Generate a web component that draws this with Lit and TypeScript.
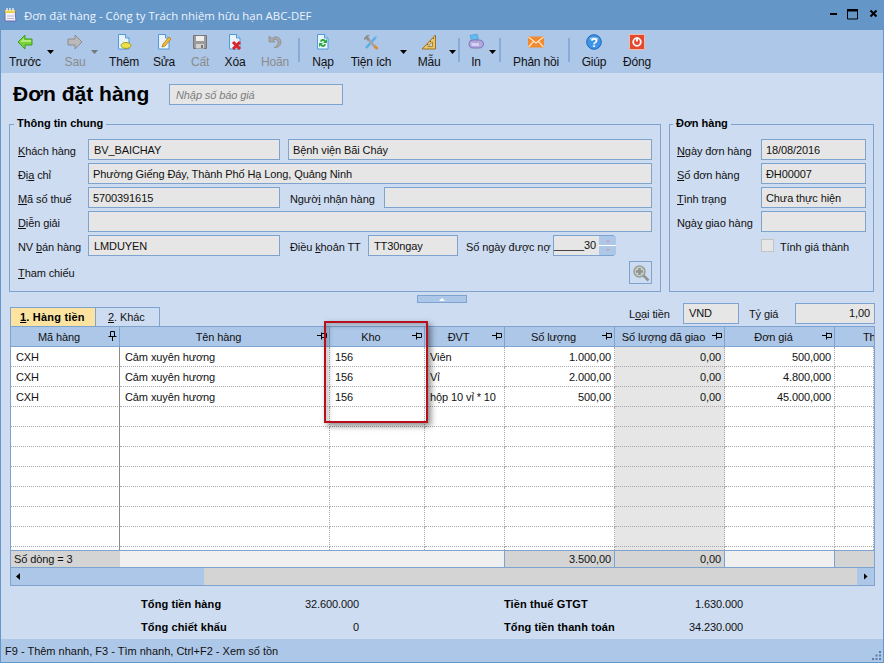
import { LitElement, html, css, svg } from 'lit';
import { customElement } from 'lit/decorators.js';

const page = svg`<path d="M2.500 .5h7l3.500 3.500v11h-10.500z" fill="#eaf3fc" stroke="#4f9ad8"/><path d="M9.500 .5v3.500h3.500" fill="#bcd9f3" stroke="#4f9ad8"/>`;

const icons: Record<string, unknown> = {
  back: svg`<path d="M8 1 1 8l7 7v-4h7V5H8z" fill="#78d13c" stroke="#3f9e1c" stroke-linejoin="round"/><path d="M7 4 3 8h11V6H7z" fill="#b4ec7c"/>`,
  next: svg`<path d="M8 1l7 7-7 7v-4H1V5h7z" fill="#b9b9b9" stroke="#8c8c8c" stroke-linejoin="round"/>`,
  add: svg`${page}<ellipse cx="10" cy="11.500" rx="5" ry="3" fill="#ecdf4a" stroke="#a39a1e"/>`,
  edit: svg`${page}<path d="M6 13l1-3 6-7 2 2-6 7z" fill="#f2b83c" stroke="#b5791a" stroke-width=".8"/>`,
  save: svg`<path d="M1.500 1.500h13v13h-13z" fill="#9b9b9b" stroke="#777"/><path d="M4 2h8v5H4z" fill="#eee"/><path d="M4 10h8v4.500H4z" fill="#d2d2d2"/><path d="M9 11h2v3H9z" fill="#777"/>`,
  del: svg`${page}<path d="M6 8l7 7M13 8l-7 7" stroke="#d9252a" stroke-width="3"/>`,
  undo: svg`<path d="M2 2v6h6L6 6c3-1.500 5.500.5 5 3-.3 2-2 3.500-4 4.500 4 .5 7-2 7-5.500 0-4.500-5.500-7-9-3.500z" fill="#a8a8a8" stroke="#8a8a8a" stroke-width=".7"/>`,
  load: svg`${page}<path d="M5 7.500a3 3 0 0 1 5.500-1L12 5v4H8l1.300-1.300A1.700 1.700 0 0 0 6.500 8zM11 10.500a3 3 0 0 1-5.500 1L4 13V9h4l-1.300 1.300a1.700 1.700 0 0 0 2.800-.3z" fill="#2da83a"/>`,
  tools: svg`<path d="M3 14 13 3" stroke="#59aee6" stroke-width="2.500"/><path d="M13 14 5 5" stroke="#a3a3a3" stroke-width="2.500"/><path d="M1 4l3-3h3L5 3l2 2-2 2-2-2-2 1z" fill="#8f8f8f"/><path d="M11.500 12l3 3" stroke="#e58a2c" stroke-width="2.500"/><path d="M12 1l3 1-2 3z" fill="#8fc4ea"/>`,
  ruler: svg`<path d="M14.500 1v14H1z" fill="#e8c36a" stroke="#9a7425"/><path d="M11.500 8v4.500H7z" fill="#cddcf1" stroke="#9a7425" stroke-width=".8"/><path d="M6 10l1 1M9 7l1 1M12 4l1 1" stroke="#7a5a1a"/>`,
  print: svg`<path d="M2 1.500 9 0l1.500 5-7 1.500z" fill="#62bdee" stroke="#3f93cf" stroke-width=".6"/><path d="M1 9.500Q1 6 5 6h7q3.500.5 3.500 4 0 4-5 4H5q-4 0-4-4.500z" fill="#b0a7dd" stroke="#8076b8"/><path d="M3 9h8v3H4z" fill="#d6d1f0"/>`,
  mail: svg`<path d="M0 2.500h16v11H0z" fill="#f28a2e"/><path d="M.5 3 8 9l7.500-6M.5 13l5-5.500M15.500 13l-5-5.500" fill="none" stroke="#fde6cc" stroke-width="1.200"/>`,
  help: svg`<circle cx="8" cy="8" r="7.300" fill="#3f93e6" stroke="#1f66b8"/><path d="M3 5a6 4 0 0 1 10 0 9 5 0 0 1-10 0" fill="#a9d3f7"/><text x="8" y="12.500" font-size="12" font-weight="700" text-anchor="middle" fill="#fff" font-family="Liberation Sans">?</text>`,
  close: svg`<path d="M.5.5h15v15H.5z" fill="#e2492f" stroke="#f5b9a8"/><circle cx="8" cy="8" r="3.800" fill="none" stroke="#fff" stroke-width="1.800"/><path d="M8 3.500v4" stroke="#fff" stroke-width="1.800"/>`,
};

type Tool = { c: number; w: number; kind: 'btn' | 'caret' | 'sep'; label?: string; icon?: string; off?: boolean };

const btn = (c: number, w: number, label: string, icon: string, off = false): Tool => ({ c, w, kind: 'btn', label, icon, off });
const caret = (c: number, off = false): Tool => ({ c, w: 7, kind: 'caret', off });
const sep = (c: number): Tool => ({ c, w: 2, kind: 'sep' });

const TOOLS: Tool[] = [
  btn(25, 36, 'Trước', 'back'), caret(50.5),
  btn(75, 30, 'Sau', 'next', true), caret(94.5, true),
  btn(124, 40, 'Thêm', 'add'), btn(164, 30, 'Sửa', 'edit'),
  btn(200, 30, 'Cất', 'save', true), btn(235, 32, 'Xóa', 'del'),
  btn(275, 36, 'Hoãn', 'undo', true), sep(299),
  btn(323, 30, 'Nạp', 'load'), btn(371, 50, 'Tiện ích', 'tools'), caret(403),
  btn(429, 34, 'Mẫu', 'ruler'), caret(452), sep(459),
  btn(476, 24, 'In', 'print'), caret(492.5), sep(500),
  btn(536, 56, 'Phản hồi', 'mail'), sep(569),
  btn(594, 36, 'Giúp', 'help'), btn(637, 36, 'Đóng', 'close'),
];

const HEADERS = ['Mã hàng', 'Tên hàng', 'Kho', 'ĐVT', 'Số lượng', 'Số lượng đã giao', 'Đơn giá', 'Thành tiền'];

const ROWS = [
  ['CXH', 'Cảm xuyên hương', '156', 'Viên', '1.000,00', '0,00', '500,000', ''],
  ['CXH', 'Cảm xuyên hương', '156', 'Vỉ', '2.000,00', '0,00', '4.800,000', ''],
  ['CXH', 'Cảm xuyên hương', '156', 'hộp 10 vỉ * 10', '500,00', '0,00', '45.000,000', ''],
  ...Array.from({ length: 7 }, () => ['', '', '', '', '', '', '', '']),
];

const FOOTER = ['Số dòng = 3', '', '', '', '3.500,00', '0,00', '', ''];

@customElement('app-root')
export class AppRoot extends LitElement {
  static styles = css`
    :host {
      display: block;
      width: 884px;
      height: 663px;
      font: 11px 'Liberation Sans', Arial, sans-serif;
      letter-spacing: -0.1px;
      color: #111;
    }
    * { box-sizing: border-box; }
    u { text-underline-offset: 1px; }

    .win {
      position: relative;
      display: flex;
      flex-direction: column;
      height: 663px;
      background: #cddcf1;
      border: 1px solid #6496c8;
      border-top: 0;
      overflow: hidden;
    }

    .titlebar {
      flex: 0 0 30px;
      display: flex;
      align-items: center;
      margin: 0 -1px;
      padding: 0 6px 0 4px;
      background: #6496c8;
      color: #eef4fb;
      font-family: 'Open Sans', sans-serif;
      font-size: 11.4px;
      letter-spacing: 0;
    }
    .titlebar svg { display: block; }
    .title-text { margin-left: 7px; flex: 1; }
    .ctrls { display: flex; align-items: center; }

    .toolbar {
      flex: 0 0 43px;
      display: flex;
      background: #adc7e8;
      font-size: 12px;
      letter-spacing: -0.2px;
    }
    .tool {
      flex: none;
      display: flex;
      flex-direction: column;
      align-items: center;
      padding-top: 4px;
      white-space: nowrap;
    }
    .tool svg { display: block; }
    .tool span { margin-top: 5px; line-height: 14px; }
    .tool.off { color: #8b8b8b; }
    .caret {
      flex: none;
      width: 7px;
      height: 4px;
      margin-top: 20px;
      background: #000;
      clip-path: polygon(0 0, 100% 0, 50% 100%);
    }
    .caret.off { background: #777; }
    .sep {
      flex: none;
      height: 24px;
      margin-top: 8px;
      background: #8aabd6;
    }

    .doc-head {
      display: flex;
      align-items: center;
      height: 21px;
      margin: 11px 0 12px;
    }
    h1 {
      margin: 0 0 2px 12px;
      width: 156px;
      font-size: 21px;
      line-height: 21px;
      letter-spacing: 0;
      color: #000;
    }
    .quote {
      width: 174px;
      height: 21px;
      padding: 0 6px;
      line-height: 20px;
      background: #e6e6e6;
      border: 1px solid #7ea3cf;
      color: #7d7d7d;
      font-style: italic;
    }

    .groups { display: flex; height: 175px; padding-left: 8px; gap: 8px; }
    fieldset {
      margin: 0;
      min-width: 0;
      border: 1px solid #7ea3cf;
      display: flex;
      flex-direction: column;
      gap: 3px;
    }
    .general { flex: 0 0 652px; padding: 7px 8px 7px; }
    .order { flex: 0 0 205px; padding: 7px 7px 7px; }
    legend {
      margin-left: -4px;
      padding: 0 3px 2px;
      font-weight: 700;
      line-height: 13px;
      letter-spacing: 0;
      color: #000;
    }
    .row { display: flex; flex: 0 0 21px; height: 21px; align-items: center; white-space: nowrap; }
    .lbl { flex: none; padding-top: 3px; }
    .w70 { width: 70px; }
    .w84 { width: 84px; }
    .w94 { width: 94px; }
    .w78 { width: 78px; }
    .w90 { width: 90px; }
    .w87 { width: 87px; }
    .field {
      flex: none;
      height: 21px;
      padding: 0 4px;
      line-height: 20px;
      background: #e6e6e6;
      border: 1px solid #7ea3cf;
      overflow: hidden;
    }
    .p5 { padding-left: 5px; }
    .grow { flex: 1; }
    .w192 { width: 192px; }
    .ml8 { margin-left: 8px; }
    .ml10 { margin-left: 10px; }
    .end { justify-content: space-between; height: 23px; flex-basis: 23px; margin-top: 2px; }
    .end .lbl { padding-top: 1px; }
    .right { text-align: right; }

    .spin {
      flex: none;
      display: flex;
      width: 61px;
      height: 21px;
      background: #e6e6e6;
      border: 1px solid #7ea3cf;
    }
    .spin-val { flex: 1; padding-right: 3px; line-height: 19px; text-align: right; white-space: nowrap; }
    .spin-btns {
      flex: 0 0 17px;
      display: flex;
      flex-direction: column;
      justify-content: space-between;
      align-items: center;
      padding: 4px 0;
      background: linear-gradient(#adc7e8 9px, #fff 9px, #fff 10px, #adc7e8 10px);
    }
    .tri-up, .tri-down { width: 0; height: 0; border: 2px solid transparent; }
    .tri-up { border-bottom: 2px solid #d29aa8; border-top: 0; }
    .tri-down { border-top: 2px solid #d29aa8; border-bottom: 0; }

    .search {
      flex: none;
      width: 23px;
      height: 23px;
      display: flex;
      align-items: center;
      justify-content: center;
      border: 1px solid #7ea3cf;
    }
    .box {
      flex: none;
      width: 13px;
      height: 13px;
      background: #e6e6e6;
      border: 1px solid #c3c3c3;
      margin-right: 6px;
    }

    .splitter {
      display: flex;
      justify-content: center;
      align-items: center;
      width: 50px;
      height: 8px;
      margin: 3px 0 0 416px;
      background: #adc7e8;
      border: 1px solid #7ea3cf;
    }
    .splitter i {
      width: 0;
      height: 0;
      border: 3px solid transparent;
      border-bottom: 3px solid #fff;
      border-top: 0;
    }

    .tabline {
      display: flex;
      height: 23px;
      padding-left: 9px;
      white-space: nowrap;
    }
    .tab {
      flex: none;
      align-self: flex-end;
      height: 20px;
      margin-bottom: -1px;
      line-height: 19px;
      border: 1px solid #7ea3cf;
      border-bottom: 0;
    }
    .tab.on {
      width: 86px;
      padding-left: 9px;
      background: #fde3a0;
      font-weight: 700;
      letter-spacing: 0.2px;
      color: #000;
    }
    .tab.plain { width: 64px; padding-left: 12px; border-left: 0; }
    .rates { display: flex; align-items: flex-start; margin-left: auto; padding-right: 8px; }
    .rates .lbl { padding-top: 5px; }
    .rates .field { line-height: 19px; }
    .w54 { width: 54px; }
    .w46 { width: 46px; }
    .w56 { width: 56px; }
    .w80 { width: 80px; }

    .table {
      margin: 0 8px 0 9px;
      height: 260px;
      border: 1px solid #7ea3cf;
      background: #fff;
      overflow: hidden;
      flex: none;
    }
    .cols {
      display: grid;
      grid-template-columns: 109px 210px 95px 80px 110px 110px 110px 39px;
    }
    .hd {
      position: relative;
      height: 20px;
      padding-right: 12px;
      line-height: 20px;
      text-align: center;
      white-space: nowrap;
      overflow: hidden;
      background: #adc7e8;
      border-right: 1px solid #7ea3cf;
      border-bottom: 1px solid #7ea3cf;
    }
    .hd svg { position: absolute; right: 1px; top: 5px; }
    .hd.first svg { right: 2px; top: 4px; }
    .hd.cut { padding: 0 0 0 28px; text-align: left; border-right: 0; }
    .cell {
      height: 20px;
      padding: 0 3px 0 5px;
      line-height: 20px;
      white-space: nowrap;
      overflow: hidden;
      border-right: 1px dotted #a9a9a9;
      border-bottom: 1px dotted #a9a9a9;
    }
    .cell.num { text-align: right; }
    .cell.first { border-right: 1px solid #8a8a8a; }
    .cell.gray { background: #e6e6e6; }
    .cell.fill { height: 3px; border-bottom: 0; }
    .foot {
      height: 17px;
      padding: 0 3px;
      line-height: 16px;
      background: #f0f0f0;
      border-top: 1px solid #7ea3cf;
      white-space: nowrap;
    }
    .foot.first { background: #d4d4d4; }
    .foot.sum { background: #d4d4d4; text-align: right; }
    .foot.line { border-right: 1px solid #7ea3cf; }
    .scroll {
      display: flex;
      align-items: center;
      height: 18px;
      background: #d4d4d4;
      border-top: 1px solid #7ea3cf;
    }
    .thumb {
      flex: 0 0 193px;
      height: 17px;
      display: flex;
      align-items: center;
      padding-left: 5px;
      background: #adc7e8;
    }
    .thumb i, .sc-end i { width: 4px; height: 7px; background: #000; }
    .thumb i { clip-path: polygon(100% 0, 100% 100%, 0 50%); }
    .sc-end {
      margin-left: auto;
      flex: 0 0 17px;
      height: 17px;
      display: flex;
      align-items: center;
      justify-content: center;
      background: #adc7e8;
    }
    .sc-end i { clip-path: polygon(0 0, 100% 50%, 0 100%); }

    .summary {
      display: grid;
      grid-template-columns: 140px 78px 145px 150px 89px;
      grid-auto-rows: 23px;
      align-items: center;
      padding: 7px 0 0 140px;
      height: 53px;
      flex: none;
      white-space: nowrap;
    }
    .summary b { color: #000; letter-spacing: 0.1px; padding-bottom: 1px; }
    .summary span { text-align: right; padding-bottom: 1px; }
    .col2 { grid-column: 2; }
    .col4 { grid-column: 4; }

    .status {
      flex: 1;
      display: flex;
      align-items: center;
      justify-content: space-between;
      padding: 0 0 0 4px;
      background: #adc7e8;
      letter-spacing: 0;
    }
    .status svg { align-self: flex-end; margin: 0 1px 1px 0; }

    .mark {
      position: absolute;
      left: 323px;
      top: 321px;
      width: 104px;
      height: 102px;
      border: 2px solid #b80f1d;
      box-shadow: 3px 3px 6px rgba(0, 0, 0, .45), inset 3px 3px 5px rgba(0, 0, 0, .22);
      pointer-events: none;
    }
  `;

  private renderTools() {
    let x = 1;
    return TOOLS.map((t) => {
      const left = Math.round(t.c - t.w / 2);
      const gap = left - x;
      x = left + t.w;
      if (t.kind === 'caret') {
        return html`<div class="caret ${t.off ? 'off' : ''}" style="margin-left:${gap}px"></div>`;
      }
      if (t.kind === 'sep') {
        return html`<div class="sep" style="margin-left:${gap}px;width:${t.w}px"></div>`;
      }
      return html`<div class="tool ${t.off ? 'off' : ''}" style="margin-left:${gap}px;width:${t.w}px">
        <svg width="16" height="16" viewBox="0 0 16 16">${icons[t.icon!]}</svg>
        <span>${t.label}</span>
      </div>`;
    });
  }

  private pin(first: boolean) {
    return first
      ? html`<svg width="9" height="10" viewBox="0 0 9 10"><path d="M2.500.5h4v5h-4zM.5 5.500h8M4.500 5.500V10" fill="none" stroke="#000"/></svg>`
      : html`<svg width="11" height="9" viewBox="0 0 11 9"><path d="M4.500 1.500h5v4h-5zM4.500.5v7M0 3.500h4.500" fill="none" stroke="#000"/></svg>`;
  }

  private renderTable() {
    return html`<div class="table">
      <div class="cols">
        ${HEADERS.map((h, i) => html`<div class="hd ${i === 0 ? 'first' : ''} ${i === 7 ? 'cut' : ''}">${h}${i < 7 ? this.pin(i === 0) : ''}</div>`)}
      </div>
      ${ROWS.map((r) => html`<div class="cols">
        ${r.map((v, i) => html`<div class="cell ${i === 0 ? 'first' : ''} ${i >= 4 ? 'num' : ''} ${i === 5 ? 'gray' : ''}">${v}</div>`)}
      </div>`)}
      <div class="cols">
        ${FOOTER.map((_, i) => html`<div class="cell fill ${i === 0 ? 'first' : ''} ${i === 5 ? 'gray' : ''}"></div>`)}
      </div>
      <div class="cols">
        ${FOOTER.map((v, i) => html`<div class="foot ${i === 0 ? 'first' : ''} ${i === 4 || i === 5 || i === 7 ? 'sum' : ''} ${i >= 3 && i <= 6 ? 'line' : ''}">${v}</div>`)}
      </div>
      <div class="scroll">
        <div class="thumb"><i></i></div>
        <div class="sc-end"><i></i></div>
      </div>
    </div>`;
  }

  render() {
    return html`<div class="win">
      <div class="titlebar">
        <svg width="13" height="15" viewBox="0 0 13 15">
          <path d="M1 3h10l1 10H1z" fill="#f2f2f8" stroke="#6b6bb5"/>
          <path d="M1 2h10v3H1z" fill="#e9d24a"/>
          <path d="M3 0v3M6 0v3M9 0v3" stroke="#fff" stroke-width="1.200"/>
          <path d="M3 8h7M3 10.500h7" stroke="#b8b8dc"/>
        </svg>
        <span class="title-text">Đơn đặt hàng - Công ty Trách nhiệm hữu hạn ABC-DEF</span>
        <div class="ctrls">
          <svg width="54" height="12" viewBox="0 0 54 12">
            <path d="M6 4h7v2H6z" fill="#000"/>
            <path d="M23.500 .5h10v9.500h-10z" fill="none" stroke="#000"/>
            <path d="M23 0h11v2.500H23z" fill="#000"/>
            <path d="M46.500 1.500l6 6M52.500 1.500l-6 6" stroke="#000" stroke-width="2"/>
          </svg>
        </div>
      </div>

      <div class="toolbar">${this.renderTools()}</div>

      <div class="doc-head">
        <h1>Đơn đặt hàng</h1>
        <div class="quote">Nhập số báo giá</div>
      </div>

      <div class="groups">
        <fieldset class="general">
          <legend>Thông tin chung</legend>
          <div class="row">
            <span class="lbl w70"><u>K</u>hách hàng</span>
            <div class="field w192 p5">BV_BAICHAY</div>
            <div class="field grow ml8">Bệnh viện Bãi Cháy</div>
          </div>
          <div class="row">
            <span class="lbl w70">Đị<u>a</u> chỉ</span>
            <div class="field grow">Phường Giếng Đáy, Thành Phố Hạ Long, Quảng Ninh</div>
          </div>
          <div class="row">
            <span class="lbl w70"><u>M</u>ã số thuế</span>
            <div class="field w192">5700391615</div>
            <span class="lbl ml10 w94">Ngườ<u>i</u> nhận hàng</span>
            <div class="field grow"></div>
          </div>
          <div class="row">
            <span class="lbl w70"><u>D</u>iễn giải</span>
            <div class="field grow"></div>
          </div>
          <div class="row">
            <span class="lbl w70">NV <u>b</u>án hàng</span>
            <div class="field w192 p5">LMDUYEN</div>
            <span class="lbl ml10 w78">Điều <u>k</u>hoản TT</span>
            <div class="field w90 p5">TT30ngay</div>
            <span class="lbl ml8 w87">Số ngày được nợ</span>
            <div class="spin">
              <div class="spin-val">_____30</div>
              <div class="spin-btns"><div class="tri-up"></div><div class="tri-down"></div></div>
            </div>
          </div>
          <div class="row end">
            <span class="lbl"><u>T</u>ham chiếu</span>
            <div class="search">
              <svg width="18" height="18" viewBox="0 0 18 18">
                <circle cx="7.500" cy="7.500" r="5.500" fill="#c6cec9" stroke="#9aa09c" stroke-width="1.500"/>
                <path d="M11.500 11.500l5 5" stroke="#8f9591" stroke-width="2.500"/>
                <path d="M7.500 4v7M4 7.500h7" stroke="#8f9591" stroke-width="2.500"/>
              </svg>
            </div>
          </div>
        </fieldset>

        <fieldset class="order">
          <legend>Đơn hàng</legend>
          <div class="row"><span class="lbl w84"><u>N</u>gày đơn hàng</span><div class="field grow">18/08/2016</div></div>
          <div class="row"><span class="lbl w84"><u>S</u>ố đơn hàng</span><div class="field grow">ĐH00007</div></div>
          <div class="row"><span class="lbl w84"><u>T</u>ình trạng</span><div class="field grow">Chưa thực hiện</div></div>
          <div class="row"><span class="lbl w84">Ngà<u>y</u> giao hàng</span><div class="field grow"></div></div>
          <div class="row"><span class="lbl w84"></span><div class="box"></div><span class="lbl">Tính <u>g</u>iá thành</span></div>
        </fieldset>
      </div>

      <div class="splitter"><i></i></div>

      <div class="tabline">
        <div class="tab on"><u>1</u>. Hàng tiền</div>
        <div class="tab plain"><u>2</u>. Khác</div>
        <div class="rates">
          <span class="lbl w54">L<u>o</u>ại tiền</span>
          <div class="field w56 p5">VND</div>
          <span class="lbl ml10 w46">Tỷ <u>g</u>iá</span>
          <div class="field w80 right">1,00</div>
        </div>
      </div>

      ${this.renderTable()}

      <div class="summary">
        <b>Tổng tiền hàng</b><span class="col2">32.600.000</span><b class="col4">Tiền thuế GTGT</b><span>1.630.000</span>
        <b>Tổng chiết khấu</b><span class="col2">0</span><b class="col4">Tổng tiền thanh toán</b><span>34.230.000</span>
      </div>

      <div class="status">
        <span>F9 - Thêm nhanh, F3 - Tìm nhanh, Ctrl+F2 - Xem số tồn</span>
        <svg width="10" height="10" viewBox="0 0 10 10" fill="#5a7ca8">
          <path d="M7 0h2v2H7zM3.500 3.500h2v2h-2zM7 3.500h2v2H7zM0 7h2v2H0zM3.500 7h2v2h-2zM7 7h2v2H7z"/>
        </svg>
      </div>

      <div class="mark"></div>
    </div>`;
  }
}

declare global {
  interface HTMLElementTagNameMap {
    'app-root': AppRoot;
  }
}
